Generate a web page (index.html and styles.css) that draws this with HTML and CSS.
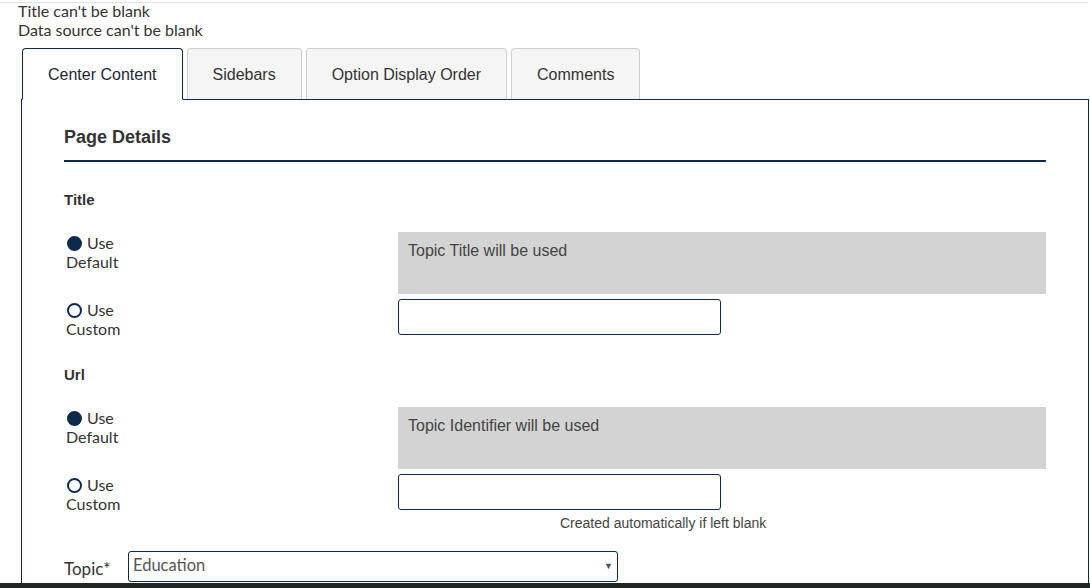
FILE: index.html
```html
<!DOCTYPE html>
<html lang="en">
<head>
    <meta charset="UTF-8">
    <meta name="viewport" content="width=device-width, initial-scale=1.0">
    <title>Edit Page</title>
    <link rel="stylesheet" href="styles.css">
</head>
<body>
    <div class="top-rule"></div>

    <div class="errors">
        <div>Title can't be blank</div>
        <div>Data source can't be blank</div>
    </div>

    <div class="tabs">
        <div class="tab active">Center Content</div>
        <div class="tab">Sidebars</div>
        <div class="tab">Option Display Order</div>
        <div class="tab">Comments</div>
    </div>

    <div class="panel">
        <h2 class="section-title">Page Details</h2>

        <h3 class="field-title">Title</h3>
        <div class="option-row">
            <label class="radio-label"><span class="radio checked"></span>Use Default</label>
            <div class="field">
                <div class="default-box">Topic Title will be used</div>
            </div>
        </div>
        <div class="option-row">
            <label class="radio-label"><span class="radio"></span>Use Custom</label>
            <div class="field">
                <input type="text" class="text-input">
            </div>
        </div>

        <h3 class="field-title url-title">Url</h3>
        <div class="option-row">
            <label class="radio-label"><span class="radio checked"></span>Use Default</label>
            <div class="field">
                <div class="default-box">Topic Identifier will be used</div>
            </div>
        </div>
        <div class="option-row">
            <label class="radio-label"><span class="radio"></span>Use Custom</label>
            <div class="field">
                <input type="text" class="text-input">
                <div class="hint">Created automatically if left blank</div>
            </div>
        </div>

        <div class="topic-row">
            <label class="topic-label" for="topic">Topic*</label>
            <div class="select-wrap">
                <select id="topic" class="select">
                    <option>Education</option>
                </select>
                <span class="select-arrow">&#9660;</span>
            </div>
        </div>
    </div>

    <div class="bottom-bar"></div>
</body>
</html>
```

FILE: styles.css
```css
/* styles.css */
* {
    margin: 0;
    padding: 0;
    box-sizing: border-box;
}

body {
    font-family: 'Lato', 'Liberation Sans', sans-serif;
    color: #333;
    background-color: #fff;
}

.top-rule {
    margin-top: 2px;
    margin-right: 2px;
    height: 1px;
    background-color: #e3e3e3;
}

.errors {
    margin-top: -2px;
    padding-left: 18px;
    font-size: 16px;
    line-height: 19px;
    color: #333;
}

/* tabs */
.tabs {
    display: flex;
    align-items: flex-start;
    gap: 4px;
    margin-top: 9px;
    padding-left: 22px;
    position: relative;
    z-index: 1;
    margin-bottom: -1px;
}

.tab {
    font-family: 'Liberation Sans', Arial, sans-serif;
    font-size: 16px;
    color: #333;
    height: 51px;
    line-height: 52px;
    padding: 0 25px;
    background-color: #f5f5f5;
    border: 1px solid #cfcfcf;
    border-bottom: none;
    border-radius: 4px 4px 0 0;
}

.tab.active {
    height: 52px;
    line-height: 51px;
    background-color: #fff;
    color: #1c2636;
    border: 1px solid #0c2a4b;
    border-bottom: 1px solid #fff;
}

/* panel */
.panel {
    margin-left: 21px;
    width: 1068px;
    border: 1px solid #0c2a4b;
    padding: 27px 42px 40px;
}

.section-title {
    font-family: 'Liberation Sans', Arial, sans-serif;
    font-size: 18px;
    font-weight: bold;
    line-height: 20px;
    color: #333;
    padding-bottom: 13px;
    border-bottom: 2px solid #0c2a4b;
}

.field-title {
    font-family: 'Liberation Sans', Arial, sans-serif;
    font-size: 15px;
    font-weight: bold;
    line-height: 20px;
    color: #333;
    margin-top: 28px;
    margin-bottom: 22px;
}

.url-title {
    margin-top: 27px;
    margin-bottom: 22px;
}

.option-row {
    display: flex;
    margin-bottom: 5px;
}

/* narrow label so "Use Default" wraps to two lines */
.radio-label {
    display: block;
    width: 70px;
    margin-right: 264px;
    padding: 1px 0 0 2px;
    font-size: 16px;
    line-height: 19px;
    color: #333;
}

.radio-label .radio {
    display: inline-block;
    width: 15px;
    height: 15px;
    margin: 0 5px -2px 1px;
    border: 2px solid #0c2a4b;
    border-radius: 50%;
}

.radio.checked {
    background-color: #0c2a4b;
}

.field {
    flex: 1;
}

.default-box {
    height: 62px;
    padding: 9px 10px;
    background-color: #d3d3d3;
    font-family: 'Liberation Sans', Arial, sans-serif;
    font-size: 16px;
    line-height: 20px;
    color: #444;
}

.text-input {
    display: block;
    width: 323px;
    height: 36px;
    border: 1px solid #0c2a4b;
    border-radius: 3px;
    font-size: 16px;
    padding: 0 8px;
    outline: none;
}

.hint {
    margin-top: 5px;
    margin-left: 162px;
    font-family: 'Liberation Sans', Arial, sans-serif;
    font-size: 14px;
    line-height: 17px;
    color: #444;
}

/* topic select */
.topic-row {
    display: flex;
    align-items: flex-end;
    margin-top: 19px;
}

.topic-label {
    width: 64px;
    font-size: 17px;
    line-height: 20px;
    padding-bottom: 3px;
    color: #333;
}

.select-wrap {
    position: relative;
    width: 490px;
}

.select {
    display: block;
    width: 100%;
    height: 31px;
    padding: 0 20px 4px 4px;
    border: 1px solid #0c2a4b;
    border-radius: 3px;
    background-color: #fff;
    font-family: 'Lato', 'Liberation Sans', sans-serif;
    font-size: 16.5px;
    color: #555;
    appearance: none;
    -webkit-appearance: none;
    outline: none;
}

.select-arrow {
    position: absolute;
    right: 5px;
    top: 9px;
    font-size: 9px;
    color: #555;
    pointer-events: none;
}

.bottom-bar {
    position: fixed;
    left: 0;
    right: 0;
    bottom: 0;
    height: 5px;
    background-color: #1f2520;
}
```
